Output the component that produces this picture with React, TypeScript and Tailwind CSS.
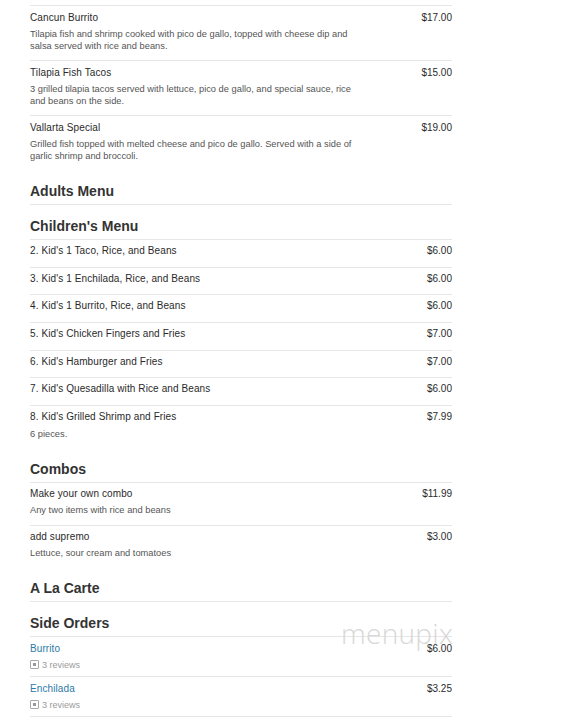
import React from "react";

type Item = {
  name: string;
  price: string;
  desc?: string;
  link?: boolean;
  reviews?: number;
  pad?: string;
  descGap?: string;
};

const font = { fontFamily: '"Liberation Sans", Arial, sans-serif' };

const MenuItem = ({ item }: { item: Item }) => (
  <div
    className={`border-t border-[#e6e6e6] flex justify-between ${
      item.pad ?? "pt-[6px] pb-[8px]"
    }`}
  >
    <div>
      <p
        className={`text-[10px] leading-[12px] tracking-[0.1px] ${
          item.link ? "text-[#2b7aa8]" : "text-[#2a2a2a]"
        }`}
      >
        {item.name}
      </p>
      {item.desc && (
        <p
          className={`${
            item.descGap ?? "mt-[4px]"
          } text-[9.3px] leading-[12px] text-[#555] max-w-[335px]`}
        >
          {item.desc}
        </p>
      )}
      {item.reviews && (
        <p className="mt-[4px] text-[9px] leading-[12px] text-[#9a9a9a] flex items-center gap-[3px]">
          <span className="inline-flex w-[9px] h-[9px] border border-[#aaa] rounded-[1px] items-center justify-center">
            <span className="w-[3px] h-[3px] bg-[#999]" />
          </span>
          {item.reviews} reviews
        </p>
      )}
    </div>
    <p className="text-[10px] leading-[12px] text-[#2a2a2a] shrink-0">
      {item.price}
    </p>
  </div>
);

const Heading = ({ title }: { title: string }) => (
  <h2 className="pt-[13px] pb-[5px] text-[14px] leading-[16px] font-bold text-[#333] border-b border-[#e6e6e6]">
    {title}
  </h2>
);

const seafood: Item[] = [
  {
    name: "Cancun Burrito",
    price: "$17.00",
    desc: "Tilapia fish and shrimp cooked with pico de gallo, topped with cheese dip and salsa served with rice and beans.",
  },
  {
    name: "Tilapia Fish Tacos",
    price: "$15.00",
    desc: "3 grilled tilapia tacos served with lettuce, pico de gallo, and special sauce, rice and beans on the side.",
  },
  {
    name: "Vallarta Special",
    price: "$19.00",
    desc: "Grilled fish topped with melted cheese and pico de gallo. Served with a side of garlic shrimp and broccoli.",
  },
];

const kidPad = "pt-[5px] pb-[9.67px]";

const kids: Item[] = [
  { name: "2. Kid's 1 Taco, Rice, and Beans", price: "$6.00", pad: kidPad },
  { name: "3. Kid's 1 Enchilada, Rice, and Beans", price: "$6.00", pad: kidPad },
  { name: "4. Kid's 1 Burrito, Rice, and Beans", price: "$6.00", pad: kidPad },
  { name: "5. Kid's Chicken Fingers and Fries", price: "$7.00", pad: kidPad },
  { name: "6. Kid's Hamburger and Fries", price: "$7.00", pad: kidPad },
  { name: "7. Kid's Quesadilla with Rice and Beans", price: "$6.00", pad: kidPad },
  {
    name: "8. Kid's Grilled Shrimp and Fries",
    price: "$7.99",
    desc: "6 pieces.",
    pad: "pt-[5px] pb-[8px]",
    descGap: "mt-[5px]",
  },
];

const combos: Item[] = [
  {
    name: "Make your own combo",
    price: "$11.99",
    desc: "Any two items with rice and beans",
    pad: "pt-[5px] pb-[9px]",
  },
  {
    name: "add supremo",
    price: "$3.00",
    desc: "Lettuce, sour cream and tomatoes",
    pad: "pt-[5px] pb-[8px]",
  },
];

const sides: Item[] = [
  { name: "Burrito", price: "$6.00", link: true, reviews: 3, pad: "pt-[6px] pb-[5px]" },
  { name: "Enchilada", price: "$3.25", link: true, reviews: 3, pad: "pt-[6px] pb-[5px]" },
];

export default function App() {
  return (
    <div className="w-[576px] h-[719px] overflow-hidden bg-white" style={font}>
      <div className="relative ml-[30px] w-[422px] pt-[5px]">
        {seafood.map((it) => (
          <MenuItem key={it.name} item={it} />
        ))}

        <Heading title="Adults Menu" />
        <Heading title="Children's Menu" />
        {kids.map((it, i) => (
          <div key={it.name} className={i === 0 ? "-mt-px" : ""}>
            <MenuItem item={it} />
          </div>
        ))}

        <Heading title="Combos" />
        {combos.map((it, i) => (
          <div key={it.name} className={i === 0 ? "-mt-px" : ""}>
            <MenuItem item={it} />
          </div>
        ))}

        <Heading title="A La Carte" />
        <Heading title="Side Orders" />
        {sides.map((it, i) => (
          <div key={it.name} className={i === 0 ? "-mt-px" : ""}>
            <MenuItem item={it} />
          </div>
        ))}
        <div className="border-t border-[#e6e6e6]" />

        {/* menupix watermark */}
        <div
          className="absolute left-[311px] top-[617px] text-[28px] leading-[32px] font-light text-[#d8d8d8] tracking-[0.3px] pointer-events-none"
          style={{ fontFamily: '"Open Sans", sans-serif' }}
        >
          menupix
        </div>
      </div>
    </div>
  );
}
